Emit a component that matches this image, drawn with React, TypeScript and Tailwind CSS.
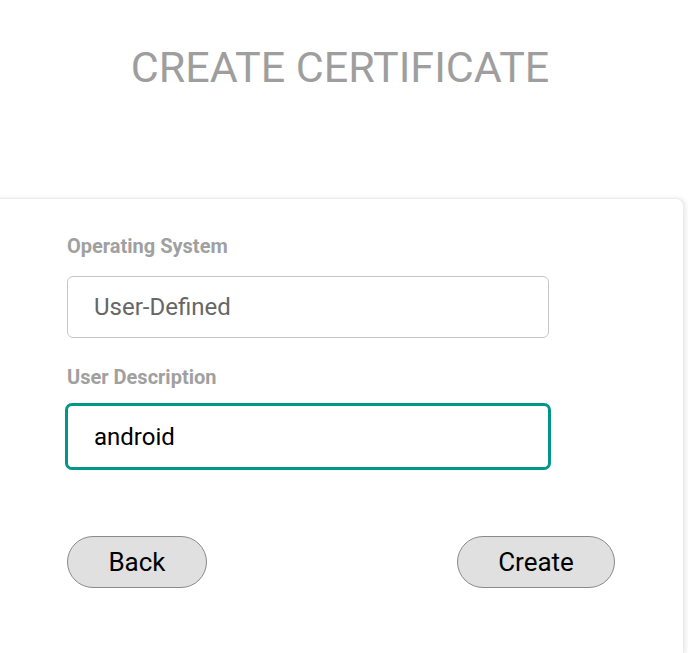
import { useState } from 'react';

export default function App() {
  const [description, setDescription] = useState('android');

  return (
    <div className="min-h-[653px] bg-white overflow-hidden font-['Roboto',sans-serif] pr-[4px]">
      {/* Page title */}
      <div className="h-[198px] pt-[43px]">
        <h1 className="text-center text-[43px] leading-[49px] font-normal text-[#9e9e9e] pr-[4px]">
          CREATE CERTIFICATE
        </h1>
      </div>

      {/* Form card */}
      <div className="-ml-[10px] min-h-[455px] bg-white border-t border-r border-[#ececec] rounded-tr-lg shadow-[2px_0_4px_rgba(0,0,0,0.08)] pl-[77px] pt-[35px]">
        <label className="block text-[20px] leading-[24px] font-bold text-[#a0a0a0]">
          Operating System
        </label>
        <div className="mt-[18px] w-[482px] h-[62px] border border-[#c6c6c6] rounded-[6px] flex items-center pl-[26px] text-[24px] text-[#666666]">
          User-Defined
        </div>

        <label className="block mt-[27px] text-[20px] leading-[24px] font-bold text-[#a0a0a0]">
          User Description
        </label>
        <input
          value={description}
          onChange={(e) => setDescription(e.target.value)}
          className="block mt-[14px] -ml-[2px] w-[486px] h-[67px] border-[3px] border-[#00968a] rounded-[7px] pl-[26px] text-[24px] text-black outline-none"
        />

        <div className="mt-[66px] w-[548px] flex justify-between">
          <button className="w-[140px] h-[52px] rounded-full bg-[#e0e0e0] border border-[#8a8a8a] text-[26px] text-black">
            Back
          </button>
          <button className="w-[158px] h-[52px] rounded-full bg-[#e0e0e0] border border-[#8a8a8a] text-[26px] text-black">
            Create
          </button>
        </div>
      </div>
    </div>
  );
}
